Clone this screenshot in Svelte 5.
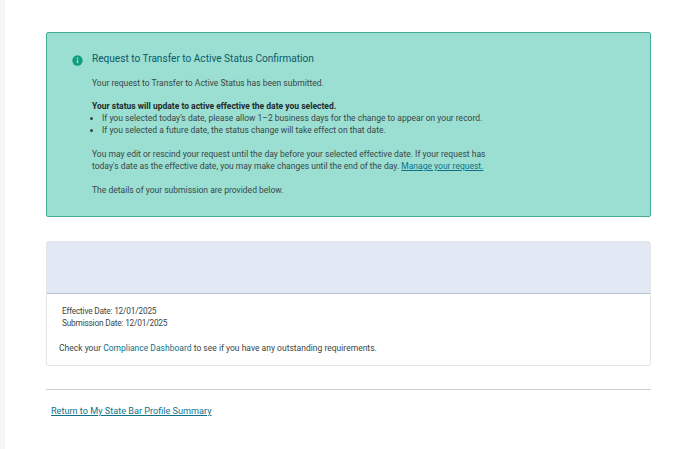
<script>
  const bullets = [
    "If you selected today's date, please allow 1–2 business days for the change to appear on your record.",
    "If you selected a future date, the status change will take effect on that date."
  ];
</script>

<div class="page">
  <div class="gutter"></div>
  <main class="content">
    <section class="alert">
      <svg class="info" viewBox="0 0 12 12" aria-hidden="true">
        <circle cx="6" cy="6" r="5.6" fill="#0f9d80" />
        <rect x="5.2" y="5.2" width="1.6" height="3.8" fill="#9adfd2" />
        <rect x="5.2" y="2.8" width="1.6" height="1.6" fill="#9adfd2" />
      </svg>
      <div class="alert-body">
        <h2>Request to Transfer to Active Status Confirmation</h2>
        <p class="first">Your request to Transfer to Active Status has been submitted.</p>
        <p class="strong">Your status will update to active effective the date you selected.</p>
        <ul>
          {#each bullets as b}<li>{b}</li>{/each}
        </ul>
        <p class="para">You may edit or rescind your request until the day before your selected effective date. If your request has<br />today's date as the effective date, you may make changes until the end of the day. <a href="#m">Manage your request.</a></p>
        <p class="para">The details of your submission are provided below.</p>
      </div>
    </section>

    <section class="card">
      <div class="card-head"></div>
      <div class="card-body">
        <div class="dates">
          <div>Effective Date: 12/01/2025</div>
          <div>Submission Date: 12/01/2025</div>
        </div>
        <p class="check">Check your <a class="plain" href="#c">Compliance Dashboard</a> to see if you have any outstanding requirements.</p>
      </div>
    </section>

    <hr />
    <a class="back" href="#r">Return to My State Bar Profile Summary</a>
  </main>
</div>

<style>
  :global(body) {
    margin: 0;
    background: #fff;
  }
  .page {
    display: flex;
    height: 449px;
    overflow: hidden;
    font-family: Roboto, "Liberation Sans", sans-serif;
    font-size: 8.52px;
    line-height: 12px;
    color: #3a4646;
  }
  .gutter {
    width: 5px;
    flex: none;
    background: #f6f6f6;
  }
  .content {
    width: 605px;
    margin-left: 41px;
    padding-top: 32px;
  }
  .alert {
    box-sizing: border-box;
    height: 185px;
    display: flex;
    background: #9adfd2;
    border: 1px solid #45ad96;
    border-radius: 2px;
    padding: 19px 0 0 25px;
  }
  .info {
    width: 11px;
    height: 11px;
    flex: none;
    margin-top: 3px;
    margin-right: 9px;
  }
  h2 {
    margin: 0;
    font-size: 10.1px;
    font-weight: 400;
    line-height: 14px;
    color: #0c5a68;
  }
  p {
    margin: 0;
  }
  .first {
    margin-top: 11px;
  }
  .strong {
    margin-top: 11px;
    font-weight: 700;
    color: #1f2a2a;
  }
  ul {
    margin: 0;
    padding: 0 0 0 10px;
  }
  .para {
    margin-top: 12px;
  }
  a {
    color: #0f7088;
    text-decoration: underline;
  }
  a.plain {
    text-decoration: none;
  }
  .card {
    box-sizing: border-box;
    height: 125px;
    margin-top: 24px;
    border: 1px solid #e3e5e6;
    border-radius: 3px;
    overflow: hidden;
  }
  .card-head {
    box-sizing: border-box;
    height: 53px;
    margin: -1px -1px 0;
    background: #e2e9f4;
    border: 1px solid #b3c0d0;
    border-radius: 3px 3px 0 0;
  }
  .card-body {
    padding: 11px 12px 0;
  }
  .dates {
    padding-left: 3px;
    font-size: 8.3px;
    letter-spacing: -0.2px;
  }
  .check {
    margin-top: 13px;
  }
  hr {
    height: 1px;
    border: 0;
    background: #cccfd0;
    margin: 23px 0 0;
  }
  .back {
    display: inline-block;
    margin: 15px 0 0 5px;
    font-size: 9.15px;
  }
</style>
